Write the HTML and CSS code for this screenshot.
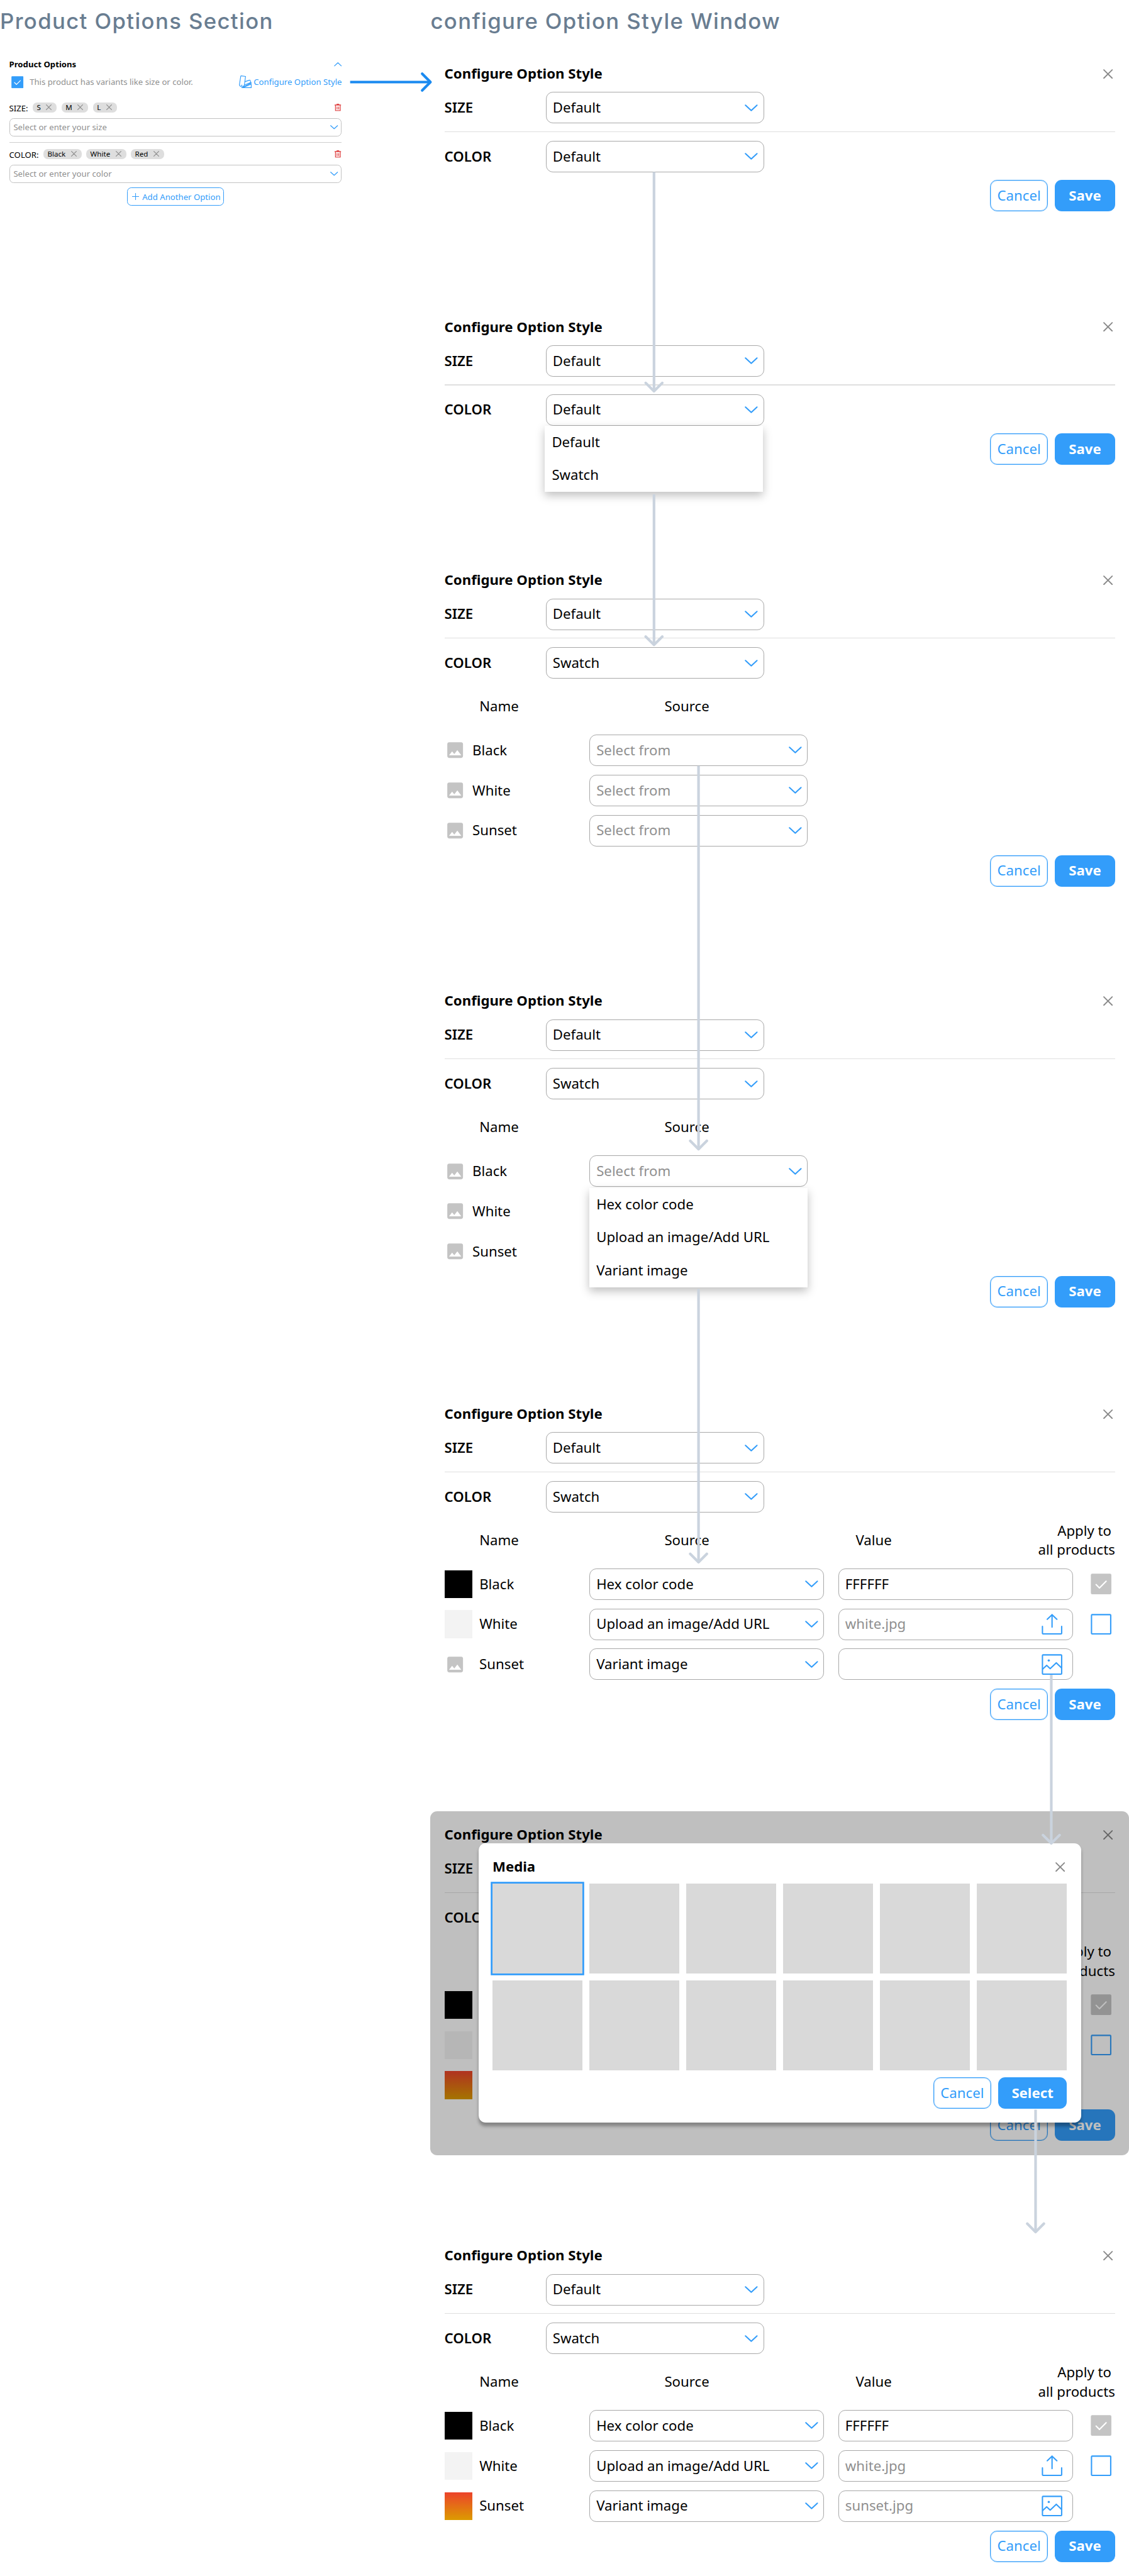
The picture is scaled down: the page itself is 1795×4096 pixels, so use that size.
FILE: index.html
```html
<!DOCTYPE html>
<html lang="en">
<head>
<meta charset="utf-8">
<title>Configure Option Style</title>
<link rel="stylesheet" href="styles.css">
</head>
<body>
<svg class="sprite" aria-hidden="true">
  <symbol id="chevron" viewBox="0 0 30 16"><path d="M1.8 1.8 15 14 28.2 1.8" fill="none" stroke="currentColor" stroke-width="3" stroke-linecap="round" stroke-linejoin="round"/></symbol>
  <symbol id="close" viewBox="0 0 22 22"><path d="M1.5 1.5 20.5 20.5M20.5 1.5 1.5 20.5" fill="none" stroke="currentColor" stroke-width="2.7" stroke-linecap="round"/></symbol>
  <symbol id="image-fill" viewBox="0 0 24 24"><path fill="currentColor" d="M21 19V5c0-1.1-.9-2-2-2H5c-1.1 0-2 .9-2 2v14c0 1.1.9 2 2 2h14c1.1 0 2-.9 2-2zM8.500 13.500l2.500 3.010L14.500 12l4.500 6H5l3.500-4.500z"/></symbol>
  <symbol id="upload" viewBox="0 0 48 48"><path d="M24 30.500V2M13 12.500 24 2 35 12.500M2 29V44.500Q2 46 3.500 46H44.500Q46 46 46 44.500V29" fill="none" stroke="currentColor" stroke-width="3" stroke-linecap="round" stroke-linejoin="round"/></symbol>
  <symbol id="picture" viewBox="0 0 48 48"><g fill="none" stroke="currentColor" stroke-width="3" stroke-linejoin="round"><rect x="2" y="2" width="44" height="44" rx="1.500"/><path d="M2 35 11.700 26 19.700 33.500 33.700 20 46 32"/></g><circle cx="16.500" cy="14.800" r="2.600" fill="currentColor"/></symbol>
  <symbol id="box" viewBox="0 0 48 48"><rect x="2" y="2" width="44" height="44" rx="1.500" fill="none" stroke="currentColor" stroke-width="3"/></symbol>
  <symbol id="box-checked" viewBox="0 0 48 48"><rect x=".5" y=".5" width="47" height="47" rx="3" fill="currentColor"/><path d="M12.500 25.300 20.200 33 35.500 17.500" fill="none" stroke="#fff" stroke-width="3" stroke-linecap="round" stroke-linejoin="round"/></symbol>
  <symbol id="trash" viewBox="0 0 15 17"><path d="M0 1.800H4.200Q4.200 0 6 0H9Q10.800 0 10.800 1.800H15V4H0z" fill="currentColor"/><path d="M2 3.500V15.800H13V3.500M5.600 6.500V13M9.400 6.500V13" fill="none" stroke="currentColor" stroke-width="1.800"/></symbol>
  <symbol id="swatches" viewBox="0 0 29 29"><g fill="none" stroke="currentColor" stroke-width="1.700" stroke-linejoin="round" stroke-linecap="round"><path d="M5 .9 15 2.200 12.300 22A6 6 0 0 1 .9 21.500L4 1.800Q4.200 .8 5 .9z"/><path d="M13.500 14.300 24.200 10.600Q25 10.300 25.300 11L28 17.500 9.500 26.500M12.500 22 27 16"/><path d="M9 27.500 28 19.800V28H6.500"/></g><circle cx="6.300" cy="22.700" r="1.500" fill="currentColor"/></symbol>
  <symbol id="plus" viewBox="0 0 16 16"><path d="M8 0V16M0 8H16" stroke="currentColor" stroke-width="1.500"/></symbol>
</svg>

<main class="canvas">
  <section class="column-left">
    <h1 class="heading">Product Options Section</h1>
    <div class="options">
      <div class="options-title"><strong>Product Options</strong><svg class="chev-sm up"><use href="#chevron"/></svg></div>
      <div class="options-toggle">
        <svg class="check-sm"><use href="#box-checked"/></svg>
        <span class="muted">This product has variants like size or color.</span>
        <a class="configure"><svg class="swatch-icon"><use href="#swatches"/></svg>Configure Option Style</a>
      </div>
      <div class="chips">
        <span class="chips-label">SIZE:</span>
        <span class="chip">S<svg><use href="#close"/></svg></span>
        <span class="chip">M<svg><use href="#close"/></svg></span>
        <span class="chip">L<svg><use href="#close"/></svg></span>
        <svg class="trash"><use href="#trash"/></svg>
      </div>
      <div class="combo">Select or enter your size<svg class="chev-sm"><use href="#chevron"/></svg></div>
      <div class="options-divider"></div>
      <div class="chips">
        <span class="chips-label">COLOR:</span>
        <span class="chip">Black<svg><use href="#close"/></svg></span>
        <span class="chip">White<svg><use href="#close"/></svg></span>
        <span class="chip">Red<svg><use href="#close"/></svg></span>
        <svg class="trash"><use href="#trash"/></svg>
      </div>
      <div class="combo">Select or enter your color<svg class="chev-sm"><use href="#chevron"/></svg></div>
      <div class="add-option"><svg><use href="#plus"/></svg>Add Another Option</div>
    </div>
  </section>

  <section class="column-right">
    <h1 class="heading">configure Option Style Window</h1>

    <article class="window gap-a">
      <header class="titlebar"><h2>Configure Option Style</h2><svg class="close"><use href="#close"/></svg></header>
      <div class="field"><span class="label">SIZE</span><div class="select">Default<svg><use href="#chevron"/></svg></div></div>
      <div class="divider"></div>
      <div class="field"><span class="label">COLOR</span><div class="select">Default<svg><use href="#chevron"/></svg></div></div>
      <footer class="actions tight"><span class="btn ghost">Cancel</span><span class="btn solid">Save</span></footer>
    </article>

    <article class="window gap-a">
      <header class="titlebar"><h2>Configure Option Style</h2><svg class="close"><use href="#close"/></svg></header>
      <div class="field"><span class="label">SIZE</span><div class="select">Default<svg><use href="#chevron"/></svg></div></div>
      <div class="divider"></div>
      <div class="field"><span class="label">COLOR</span><div class="select">Default<svg><use href="#chevron"/></svg>
        <div class="menu menu-style"><div>Default</div><div>Swatch</div></div></div></div>
      <footer class="actions tight"><span class="btn ghost">Cancel</span><span class="btn solid">Save</span></footer>
    </article>

    <article class="window gap-b">
      <header class="titlebar"><h2>Configure Option Style</h2><svg class="close"><use href="#close"/></svg></header>
      <div class="field"><span class="label">SIZE</span><div class="select">Default<svg><use href="#chevron"/></svg></div></div>
      <div class="divider"></div>
      <div class="field"><span class="label">COLOR</span><div class="select">Swatch<svg><use href="#chevron"/></svg></div></div>
      <div class="thead"><span class="th-name">Name</span><span class="th-source">Source</span></div>
      <div class="rows">
        <div class="row"><div class="name"><svg class="ph"><use href="#image-fill"/></svg>Black</div><div class="select muted-text">Select from<svg><use href="#chevron"/></svg></div></div>
        <div class="row"><div class="name"><svg class="ph"><use href="#image-fill"/></svg>White</div><div class="select muted-text">Select from<svg><use href="#chevron"/></svg></div></div>
        <div class="row"><div class="name"><svg class="ph"><use href="#image-fill"/></svg>Sunset</div><div class="select muted-text">Select from<svg><use href="#chevron"/></svg></div></div>
      </div>
      <footer class="actions"><span class="btn ghost">Cancel</span><span class="btn solid">Save</span></footer>
    </article>

    <article class="window gap-c">
      <header class="titlebar"><h2>Configure Option Style</h2><svg class="close"><use href="#close"/></svg></header>
      <div class="field"><span class="label">SIZE</span><div class="select">Default<svg><use href="#chevron"/></svg></div></div>
      <div class="divider"></div>
      <div class="field"><span class="label">COLOR</span><div class="select">Swatch<svg><use href="#chevron"/></svg></div></div>
      <div class="thead"><span class="th-name">Name</span><span class="th-source">Source</span></div>
      <div class="rows">
        <div class="row"><div class="name"><svg class="ph"><use href="#image-fill"/></svg>Black</div><div class="select muted-text">Select from<svg><use href="#chevron"/></svg>
          <div class="menu menu-source"><div>Hex color code</div><div>Upload an image/Add URL</div><div>Variant image</div></div></div></div>
        <div class="row"><div class="name"><svg class="ph"><use href="#image-fill"/></svg>White</div></div>
        <div class="row"><div class="name"><svg class="ph"><use href="#image-fill"/></svg>Sunset</div></div>
      </div>
      <footer class="actions"><span class="btn ghost">Cancel</span><span class="btn solid">Save</span></footer>
    </article>

    <article class="window gap-b">
      <header class="titlebar"><h2>Configure Option Style</h2><svg class="close"><use href="#close"/></svg></header>
      <div class="field"><span class="label">SIZE</span><div class="select">Default<svg><use href="#chevron"/></svg></div></div>
      <div class="divider"></div>
      <div class="field"><span class="label">COLOR</span><div class="select">Swatch<svg><use href="#chevron"/></svg></div></div>
      <div class="thead"><span class="th-name">Name</span><span class="th-source">Source</span><span class="th-value">Value</span><span class="th-apply">Apply to <br>all products</span></div>
      <div class="rows">
        <div class="row"><div class="name"><i class="sw black"></i>Black</div><div class="select wide">Hex color code<svg><use href="#chevron"/></svg></div><div class="input">FFFFFF</div><svg class="check off"><use href="#box-checked"/></svg></div>
        <div class="row"><div class="name"><i class="sw white"></i>White</div><div class="select wide">Upload an image/Add URL<svg><use href="#chevron"/></svg></div><div class="input muted-text">white.jpg<svg><use href="#upload"/></svg></div><svg class="check"><use href="#box"/></svg></div>
        <div class="row"><div class="name wide-name"><svg class="ph"><use href="#image-fill"/></svg>Sunset</div><div class="select wide">Variant image<svg><use href="#chevron"/></svg></div><div class="input"><svg><use href="#picture"/></svg></div></div>
      </div>
      <footer class="actions"><span class="btn ghost">Cancel</span><span class="btn solid">Save</span></footer>
    </article>

    <article class="window gap-b dimmed">
      <header class="titlebar"><h2>Configure Option Style</h2><svg class="close"><use href="#close"/></svg></header>
      <div class="field"><span class="label">SIZE</span></div>
      <div class="divider"></div>
      <div class="field"><span class="label">COLOR</span></div>
      <div class="thead"><span class="th-apply">Apply to <br>all products</span></div>
      <div class="rows">
        <div class="row spread"><i class="sw black"></i><svg class="check off"><use href="#box-checked"/></svg></div>
        <div class="row spread"><i class="sw white"></i><svg class="check"><use href="#box"/></svg></div>
        <div class="row"><i class="sw sunset"></i></div>
      </div>
      <footer class="actions"><span class="btn ghost">Cancel</span><span class="btn solid">Save</span></footer>
      <div class="dialog">
        <header class="titlebar"><h2>Media</h2><svg class="close"><use href="#close"/></svg></header>
        <div class="media">
          <i class="tile selected"></i><i class="tile"></i><i class="tile"></i><i class="tile"></i><i class="tile"></i><i class="tile"></i>
          <i class="tile"></i><i class="tile"></i><i class="tile"></i><i class="tile"></i><i class="tile"></i><i class="tile"></i>
        </div>
        <footer class="actions dialog-actions"><span class="btn ghost">Cancel</span><span class="btn solid select-btn">Select</span></footer>
      </div>
    </article>

    <article class="window">
      <header class="titlebar"><h2>Configure Option Style</h2><svg class="close"><use href="#close"/></svg></header>
      <div class="field"><span class="label">SIZE</span><div class="select">Default<svg><use href="#chevron"/></svg></div></div>
      <div class="divider"></div>
      <div class="field"><span class="label">COLOR</span><div class="select">Swatch<svg><use href="#chevron"/></svg></div></div>
      <div class="thead"><span class="th-name">Name</span><span class="th-source">Source</span><span class="th-value">Value</span><span class="th-apply">Apply to <br>all products</span></div>
      <div class="rows">
        <div class="row"><div class="name"><i class="sw black"></i>Black</div><div class="select wide">Hex color code<svg><use href="#chevron"/></svg></div><div class="input">FFFFFF</div><svg class="check off"><use href="#box-checked"/></svg></div>
        <div class="row"><div class="name"><i class="sw white"></i>White</div><div class="select wide">Upload an image/Add URL<svg><use href="#chevron"/></svg></div><div class="input muted-text">white.jpg<svg><use href="#upload"/></svg></div><svg class="check"><use href="#box"/></svg></div>
        <div class="row"><div class="name"><i class="sw sunset"></i>Sunset</div><div class="select wide">Variant image<svg><use href="#chevron"/></svg></div><div class="input muted-text">sunset.jpg<svg><use href="#picture"/></svg></div></div>
      </div>
      <footer class="actions"><span class="btn ghost">Cancel</span><span class="btn solid">Save</span></footer>
    </article>
  </section>

  <!-- flow connectors between the screens -->
  <svg class="connectors" viewBox="0 0 2586 5900" preserveAspectRatio="none">
    <g fill="none" stroke-width="6" stroke-linejoin="round">
      <g stroke="#1a8af0"><path d="M802 188H984"/><path d="M967 169 986 188 967 207" stroke-linecap="round"/></g>
      <g stroke="#cad3de">
        <path d="M1498 394V894M1498 1132V1476M1600 1754V2631M1600 2952V3577M2408 3836V4221M2372 4832V5110"/>
        <path stroke-linecap="round" d="M1479 877 1498 896 1517 877M1479 1458 1498 1477 1517 1458M1581 2613 1600 2632 1619 2613M1581 3559 1600 3578 1619 3559M2389 4203 2408 4222 2427 4203M2353 5093 2372 5112 2391 5093"/>
      </g>
    </g>
  </svg>
</main>
</body>
</html>
```
FILE: styles.css
```css
/* 1rem = 10 design units; the board is 129.3 x 295.05 rem */
html { font-size: 13.8825px; }
* { box-sizing: border-box; }
body {
  margin: 0;
  background: #fff;
  color: #000;
  font-family: "Noto Sans", "Open Sans", sans-serif;
  font-size: 1.6rem;
  line-height: 2.2rem;
  overflow: hidden;
}
.sprite { display: none; }
svg { display: block; flex: none; overflow: visible; }

.canvas { position: relative; display: flex; width: 129.3rem; height: 295.05rem; }
.column-left { width: 49.3rem; flex: none; }
.column-right { width: 80rem; flex: none; }
.connectors { position: absolute; z-index: 4; left: 0; top: 0; width: 129.3rem; height: 295.05rem; pointer-events: none; }

.heading {
  margin: 0;
  height: 5.74rem;
  font-family: Inter, "Open Sans", sans-serif;
  font-size: 2.5rem;
  line-height: 4.85rem;
  font-weight: 500;
  letter-spacing: .1rem;
  color: #697d91;
  white-space: nowrap;
}

/* product options card */
.options { width: 38.1rem; margin-left: 1.05rem; padding-top: 1rem; display: flex; flex-direction: column; font-size: .95rem; line-height: 1.2rem; }
.options-title { display: flex; justify-content: space-between; align-items: center; height: 1.2rem; }
.chev-sm { width: .9rem; height: .48rem; color: #339dfa; }
.chev-sm.up { transform: rotate(180deg); }
.options-toggle { display: flex; align-items: center; height: 1.4rem; margin-top: .75rem; padding-left: .25rem; }
.check-sm { width: 1.4rem; height: 1.4rem; margin-right: .7rem; color: #339dfa; }
.muted, .muted-text { color: #8f8f8f; }
.configure { display: flex; align-items: center; margin-left: auto; color: #339dfa; }
.swatch-icon { width: 1.45rem; height: 1.45rem; margin-right: .25rem; }
.chips { display: flex; align-items: center; gap: .53rem; height: 1.15rem; margin-top: 1.65rem; }
.chips-label { padding-top: .25rem; }
.chip { display: flex; align-items: center; gap: .62rem; height: 1.15rem; padding: 0 .57rem 0 .47rem; border-radius: .5rem; background: #dedede; font-size: .835rem; line-height: 1.1rem; }
.chip svg { width: .65rem; height: .65rem; color: #8a8a8a; }
.trash { width: .75rem; height: .85rem; margin-left: auto; margin-right: .1rem; color: #e04444; }
.combo { display: flex; align-items: center; justify-content: space-between; height: 2.13rem; margin-top: .64rem; padding: 0 .38rem 0 .42rem; border: 1px solid #c2c2c2; border-radius: .48rem; color: #8f8f8f; }
.options-divider { height: .07rem; margin-top: .63rem; background: #cfcfcf; }
.options-divider + .chips { margin-top: .72rem; }
.add-option { align-self: center; display: flex; align-items: center; gap: .4rem; height: 2.1rem; width: 11.15rem; margin-top: .5rem; padding-left: .5rem; border: 1px solid #339dfa; border-radius: .48rem; color: #339dfa; white-space: nowrap; }
.add-option svg { width: .8rem; height: .8rem; }

/* configure window */
.window { position: relative; width: 80rem; padding: 1.6rem; border-radius: .8rem; }
.gap-a { margin-bottom: 8.91rem; }
.gap-b { margin-bottom: 8.81rem; }
.gap-c { margin-bottom: 7.91rem; }
.titlebar { display: flex; align-items: center; justify-content: space-between; height: 2.2rem; margin-bottom: 1rem; padding-right: .25rem; }
h2 { margin: 0; font-size: 1.6rem; line-height: 2.2rem; font-weight: 700; }
.close { width: 1.1rem; height: 1.1rem; color: #8a8a8a; }
.field { display: flex; align-items: center; height: 3.6rem; }
.label { width: 11.6rem; font-weight: 600; }
.divider { height: .1rem; margin: .9rem 0 1rem; background: #dfdfdf; }
.select, .input { position: relative; display: flex; align-items: center; justify-content: space-between; height: 3.6rem; border: 1px solid #a8a8a8; border-radius: .8rem; white-space: nowrap; }
.select { width: 25rem; padding: 0 .63rem 0 .73rem; }
.select > svg { width: 1.5rem; height: .8rem; color: #339dfa; }
.wide { width: 26.9rem; }
.input { width: 26.9rem; padding: 0 1.13rem 0 .73rem; }
.input svg { width: 2.4rem; height: 2.4rem; margin-left: auto; color: #339dfa; }

.menu { position: absolute; z-index: 2; top: calc(100% + 1px); background: #fff; color: #000; box-shadow: 0 .4rem 1rem rgba(0, 0, 0, .25); }
.menu div { height: 3.8rem; line-height: 3.8rem; padding-left: .8rem; }
.menu-style { left: -.17rem; width: 25rem; }
.menu-source { left: -.07rem; width: 25rem; margin-top: .1rem; }

.thead { display: grid; grid-template-columns: 21.2rem 21.9rem 1fr auto; align-items: center; height: 6.4rem; padding-left: 4rem; }
.th-name { grid-column: 1; }
.th-source { grid-column: 2; }
.th-value { grid-column: 3; }
.th-apply { grid-column: 4; text-align: right; white-space: pre; }
.rows { display: flex; flex-direction: column; gap: 1rem; }
.row { display: flex; align-items: center; gap: 1.6rem; height: 3.6rem; }
.spread { justify-content: space-between; }
.name { display: flex; align-items: center; gap: .8rem; width: 15rem; }
.ph { width: 2.4rem; height: 2.4rem; color: #c4c4c4; }
.wide-name .ph { margin-right: .8rem; }
.sw { flex: none; width: 3.2rem; height: 3.2rem; }
.black { background: #000; }
.white { background: #f3f3f3; }
.sunset { background: linear-gradient(#ec432b, #dc9b00); }
.check { width: 2.4rem; height: 2.4rem; margin: 0 .4rem; color: #339dfa; }
.off { color: #c4c4c4; }

.actions { display: flex; justify-content: flex-end; gap: .8rem; margin-top: 1rem; }
.tight { margin-top: .9rem; }
.btn { display: flex; align-items: center; justify-content: center; height: 3.6rem; border-radius: .8rem; }
.ghost { width: 6.6rem; border: 1px solid #339dfa; box-shadow: inset 0 0 0 1px rgba(51, 157, 250, .35); color: #339dfa; }
.solid { width: 6.9rem; background: #339dfa; color: #fff; font-weight: 700; }
.select-btn { width: 7.9rem; }

/* media picker */
.dimmed { background: #fff; }
.dimmed::after { content: ""; position: absolute; inset: 0; border-radius: .8rem; background: rgba(0, 0, 0, .25); }
.dialog { position: absolute; z-index: 3; left: 5.5rem; top: 3.7rem; width: 69rem; height: 32rem; padding: 1.6rem; border-radius: .8rem; background: #fff; box-shadow: 0 .4rem .4rem rgba(0, 0, 0, .3); }
.dialog .titlebar { margin-bottom: .8rem; }
.media { display: grid; grid-template-columns: repeat(6, 10.3rem); gap: .8rem; }
.tile { height: 10.3rem; background: #d9d9d9; }
.selected { box-shadow: 0 0 0 .2rem #339dfa; }
.dialog-actions { margin-top: .8rem; }
```
